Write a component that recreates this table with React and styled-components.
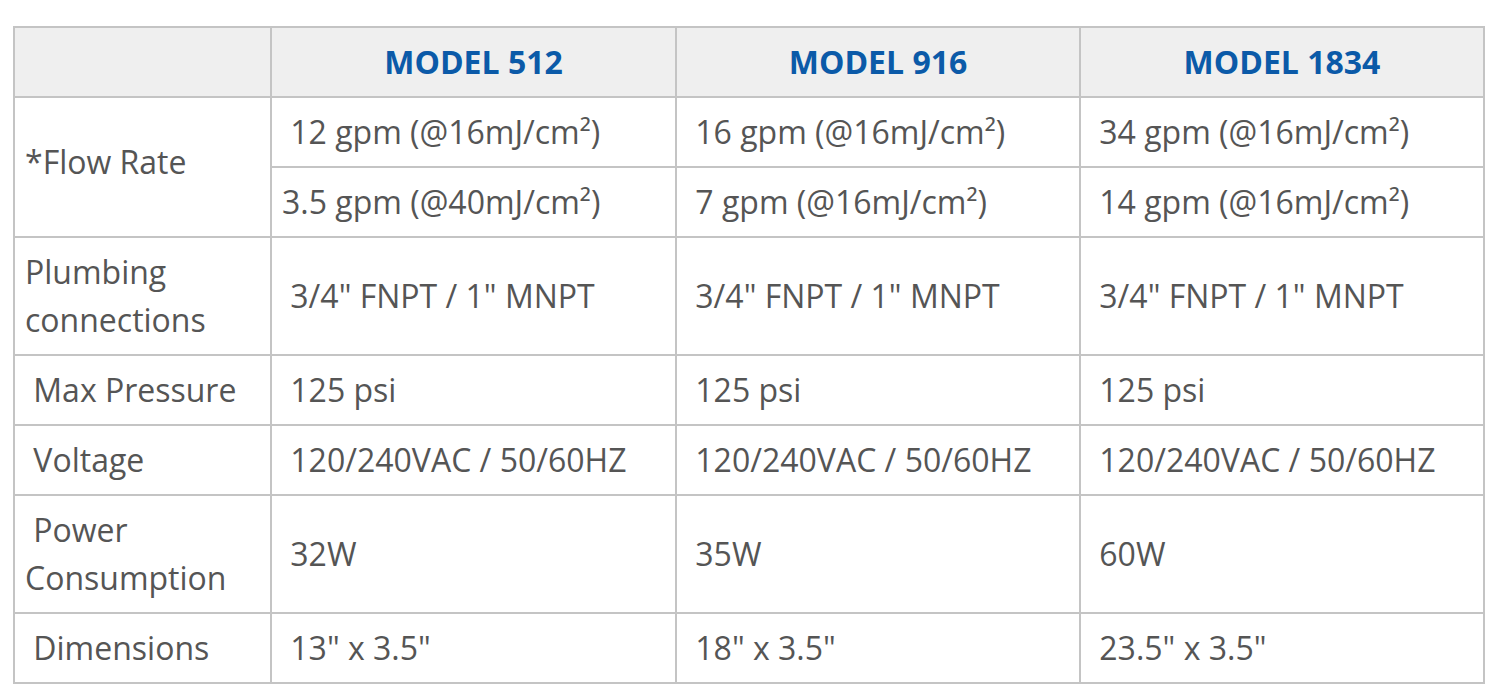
import styled, { createGlobalStyle } from "styled-components";

const NB = "\u00a0";

const models = ["MODEL 512", "MODEL 916", "MODEL 1834"];
const colWidths = [257, 405, 404, 404];

const rows = [
  {
    label: "*Flow Rate",
    span: 2,
    values: [
      `${NB}12 gpm (@16mJ/cm²)`,
      `${NB}16 gpm (@16mJ/cm²)`,
      `${NB}34 gpm (@16mJ/cm²)`,
    ],
  },
  {
    values: [
      "3.5 gpm (@40mJ/cm²)",
      `${NB}7 gpm (@16mJ/cm²)`,
      `${NB}14 gpm (@16mJ/cm²)`,
    ],
  },
  {
    label: "Plumbing connections",
    values: [
      `${NB}3/4" FNPT / 1" MNPT`,
      `${NB}3/4" FNPT / 1" MNPT`,
      `${NB}3/4" FNPT / 1" MNPT`,
    ],
  },
  {
    label: `${NB}Max Pressure`,
    values: [`${NB}125 psi`, `${NB}125 psi`, `${NB}125 psi`],
  },
  {
    label: `${NB}Voltage`,
    values: [
      `${NB}120/240VAC / 50/60HZ`,
      `${NB}120/240VAC / 50/60HZ`,
      `${NB}120/240VAC / 50/60HZ`,
    ],
  },
  {
    label: `${NB}Power Consumption`,
    values: [`${NB}32W`, `${NB}35W`, `${NB}60W`],
  },
  {
    label: `${NB}Dimensions`,
    values: [`${NB}13" x 3.5"`, `${NB}18" x 3.5"`, `${NB}23.5" x 3.5"`],
  },
];

const App = () => {
  return (
    <>
      <GlobalStyle />
      <Page>
        <SpecTable>
          <colgroup>
            {colWidths.map((w, i) => (
              <Col key={i} $width={w} />
            ))}
          </colgroup>
          <thead>
            <tr>
              <HeadCell />
              {models.map((m) => (
                <HeadCell key={m}>{m}</HeadCell>
              ))}
            </tr>
          </thead>
          <tbody>
            {rows.map((row, i) => (
              <tr key={i}>
                {row.label && (
                  <Cell rowSpan={row.span || 1} $raised={row.span > 1}>
                    {row.label}
                  </Cell>
                )}
                {row.values.map((v, j) => (
                  <Cell key={j}>{v}</Cell>
                ))}
              </tr>
            ))}
          </tbody>
        </SpecTable>
      </Page>
    </>
  );
};

export default App;

const GlobalStyle = createGlobalStyle`
  body {
    margin: 0;
    background: #fff;
  }
`;

const Page = styled.div`
  padding: 26px 0 0 13px;
  font-family: "Open Sans", "Liberation Sans", sans-serif;
`;

const SpecTable = styled.table`
  width: 1470px;
  table-layout: fixed;
  border-collapse: collapse;
  border: 2px solid #c4c4c4;
  font-size: 32px;
  line-height: 48px;
  color: #555;
`;

const Col = styled.col`
  width: ${(p) => p.$width}px;
`;

const HeadCell = styled.th`
  padding: 10px;
  border: 2px solid #c4c4c4;
  background: #efefef;
  color: #0b5aa8;
  font-weight: 700;
  text-align: center;
  height: 48px;
`;

const Cell = styled.td`
  padding: ${(p) => (p.$raised ? "0 10px 10px" : "10px")};
  border: 2px solid #c4c4c4;
  text-align: left;
  vertical-align: middle;
`;
